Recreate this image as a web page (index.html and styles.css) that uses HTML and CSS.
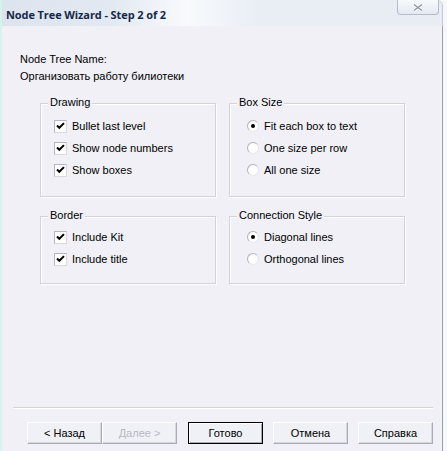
FILE: index.html
```html
<!DOCTYPE html>
<html>
<head>
<meta charset="utf-8">
<title>Node Tree Wizard</title>
<link rel="stylesheet" href="styles.css">
</head>
<body>
<div class="window">
  <div class="titlebar">
    <span class="title">Node Tree Wizard - Step 2 of 2</span>
    <span class="close">
      <svg width="14" height="9" viewBox="0 0 14 9"><path d="M3 1.5 L11 7.5 M11 1.5 L3 7.5" stroke="#ffffff" stroke-width="3.2" fill="none"/><path d="M3 1.5 L11 7.5 M11 1.5 L3 7.5" stroke="#8d93a0" stroke-width="1.3" fill="none"/></svg>
    </span>
  </div>
  <div class="client">
    <div class="name">
      <div>Node Tree Name:</div>
      <div>Организовать работу билиотеки</div>
    </div>
    <div class="groups">
      <div class="group checks">
        <span class="group-title">Drawing</span>
        <div class="row"><span class="check"><svg width="11" height="11" viewBox="0 0 11 11"><path d="M2 4.5 L4.3 6.8 L9 2.1" stroke="#000" stroke-width="2" fill="none"/></svg></span>Bullet last level</div>
        <div class="row"><span class="check"><svg width="11" height="11" viewBox="0 0 11 11"><path d="M2 4.5 L4.3 6.8 L9 2.1" stroke="#000" stroke-width="2" fill="none"/></svg></span>Show node numbers</div>
        <div class="row"><span class="check"><svg width="11" height="11" viewBox="0 0 11 11"><path d="M2 4.5 L4.3 6.8 L9 2.1" stroke="#000" stroke-width="2" fill="none"/></svg></span>Show boxes</div>
      </div>
      <div class="group radios">
        <span class="group-title">Box Size</span>
        <div class="row"><span class="radio on"></span>Fit each box to text</div>
        <div class="row"><span class="radio"></span>One size per row</div>
        <div class="row"><span class="radio"></span>All one size</div>
      </div>
      <div class="group checks low">
        <span class="group-title">Border</span>
        <div class="row"><span class="check"><svg width="11" height="11" viewBox="0 0 11 11"><path d="M2 4.5 L4.3 6.8 L9 2.1" stroke="#000" stroke-width="2" fill="none"/></svg></span>Include Kit</div>
        <div class="row"><span class="check"><svg width="11" height="11" viewBox="0 0 11 11"><path d="M2 4.5 L4.3 6.8 L9 2.1" stroke="#000" stroke-width="2" fill="none"/></svg></span>Include title</div>
      </div>
      <div class="group radios low">
        <span class="group-title">Connection Style</span>
        <div class="row"><span class="radio on"></span>Diagonal lines</div>
        <div class="row"><span class="radio"></span>Orthogonal lines</div>
      </div>
    </div>
    <div class="spacer"></div>
    <div class="separator"></div>
    <div class="buttons">
      <div class="pair">
        <button class="btn">&lt; Назад</button>
        <button class="btn disabled">Далее &gt;</button>
      </div>
      <button class="btn default">Готово</button>
      <button class="btn">Отмена</button>
      <button class="btn">Справка</button>
    </div>
  </div>
</div>
</body>
</html>
```

FILE: styles.css
```css
html, body {
  margin: 0;
  padding: 0;
}

body {
  width: 447px;
  height: 451px;
  overflow: hidden;
  background: #f6f7fa;
  font-family: "Liberation Sans", Arial, sans-serif;
  font-size: 11px;
  color: #000;
}

.window {
  display: flex;
  flex-direction: column;
  width: 447px;
  height: 451px;
  box-sizing: border-box;
  border-left: 2px solid #d6f3f0;
  border-right: 4px solid #f6f7fa;
}

.titlebar {
  height: 26px;
  flex: none;
  display: flex;
  align-items: flex-start;
  justify-content: space-between;
  background: linear-gradient(to right, #dce4ee 0%, #e3e9f2 25%, #f8fafd 42%, #e9eef5 58%, #e8edf4 100%);
  border-right: 1px solid #c3cad6;
  border-top-right-radius: 6px;
}

.title {
  font-family: "Open Sans", "Noto Sans", sans-serif;
  font-weight: 700;
  font-size: 11px;
  letter-spacing: -0.1px;
  color: #15294a;
  margin: 7px 0 0 4px;
  line-height: 15px;
}

.close {
  width: 42px;
  height: 15px;
  box-sizing: border-box;
  margin-right: 3px;
  border: 1px solid #b3bccb;
  border-top: none;
  border-radius: 0 0 4px 4px;
  background: linear-gradient(#f7f9fc, #e4e9f1);
  display: flex;
  align-items: center;
  justify-content: center;
}

.close svg {
  display: block;
}

.client {
  flex: 1;
  display: flex;
  flex-direction: column;
  background: #f0f0f6;
  border-right: 1px solid #a0a0ae;
  padding: 25px 0 7px 0;
}

.name {
  padding-left: 18px;
  line-height: 17px;
}

.groups {
  display: grid;
  grid-template-columns: 176px 176px;
  column-gap: 13px;
  row-gap: 19px;
  margin: 18px 0 0 38px;
  align-items: start;
}

.group {
  position: relative;
  border: 1px solid #d2d2da;
  box-shadow: inset 1px 1px 0 #ffffff, 1px 1px 0 #ffffff;
  padding: 11px 0 15px 13px;
}

.group.radios {
  padding-left: 17px;
}

.group.low {
  padding-top: 9px;
  padding-bottom: 13px;
}

.group-title {
  position: absolute;
  top: -8px;
  left: 7px;
  padding: 0 2px;
  background: #f0f0f6;
  line-height: 13px;
}

.row {
  display: flex;
  align-items: center;
  height: 22px;
  white-space: nowrap;
}

.check {
  width: 13px;
  height: 13px;
  box-sizing: border-box;
  border: 1px solid #b4b4c2;
  border-right-color: #d8d8e0;
  border-bottom-color: #d8d8e0;
  background: #ffffff;
  margin-right: 5px;
  display: flex;
  align-items: center;
  justify-content: center;
}

.check svg {
  display: block;
}

.radio {
  width: 12px;
  height: 12px;
  box-sizing: border-box;
  border-radius: 50%;
  border: 1px solid;
  border-color: #b4b4c0 #e2e2ea #e8e8ee #b4b4c0;
  background: radial-gradient(circle at 55% 55%, #ffffff 55%, #eeeef3 100%);
  margin-right: 5px;
  position: relative;
}

.radio.on::after {
  content: "";
  position: absolute;
  left: 3px;
  top: 3px;
  width: 4px;
  height: 4px;
  border-radius: 50%;
  background: #000;
}

.spacer {
  flex: 1;
}

.separator {
  margin: 0 9px 0 11px;
  border-top: 1px solid #d2d2da;
  border-bottom: 1px solid #ffffff;
}

.buttons {
  display: flex;
  justify-content: flex-end;
  gap: 10px;
  margin: 13px 9px 0 0;
}

.pair {
  display: flex;
  margin-right: 1px;
}

.btn {
  width: 75px;
  height: 22px;
  box-sizing: border-box;
  padding: 0;
  font-family: "Liberation Sans", Arial, sans-serif;
  font-size: 11px;
  color: #000;
  background: #f0f1f6;
  border: 1px solid;
  border-color: #ffffff #a9a9b8 #a9a9b8 #ffffff;
  box-shadow: inset -1px -1px 0 #d6d6de;
  border-radius: 0;
}

.btn.disabled {
  color: #b8b8c4;
}

.btn.default {
  border: 1px solid #000;
  box-shadow: inset 1px 1px 0 #ffffff, inset -1px -1px 0 #a9a9b8;
}
```
